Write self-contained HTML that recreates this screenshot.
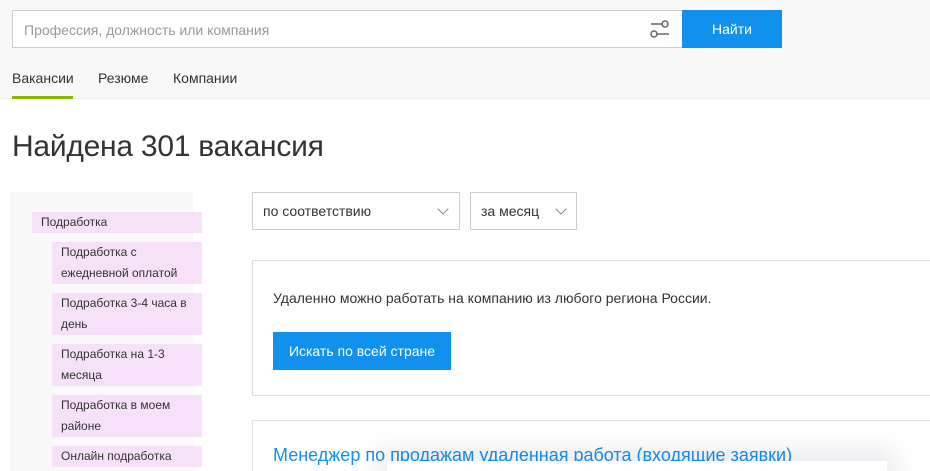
<!DOCTYPE html>
<html style="overflow:hidden;height:471px"><head><meta charset="utf-8"><style>
*{margin:0;padding:0;box-sizing:border-box}
body{width:930px;height:471px;overflow:hidden;background:#fff;font-family:"Liberation Sans",Arial,sans-serif;position:relative;color:#333}
.top{position:absolute;left:0;top:0;width:930px;height:99px;background:#f8f8f8;border-bottom:1px solid #eee}
.inp{position:absolute;left:12px;top:10px;width:671px;height:38px;background:#fff;border:1px solid #ccc;border-right:none;font-size:14px;color:#999;padding:11px 0 0 11px}
.btn{position:absolute;left:682px;top:10px;width:100px;height:38px;background:#1190ee;color:#fff;font-size:14px;text-align:center;line-height:38px}
.tabs{position:absolute;top:70px;font-size:14px;color:#333}
.ul{position:absolute;left:12px;top:96px;width:61px;height:3px;background:#8ab800}
h1{position:absolute;left:12px;top:130px;font-size:30px;font-weight:normal;color:#333;letter-spacing:-0.25px}
.side{position:absolute;left:10px;top:192px;width:183px;height:279px;background:#f8f8f8}
.it{position:absolute;background:#f6e1f9;font-size:12px;line-height:21px;color:#333;padding:0 9px}
.sel{position:absolute;top:192px;height:38px;border:1px solid #ccc;font-size:14px;line-height:36px;padding-left:10px;background:#fff}
.chev{position:absolute;top:12px;width:8px;height:8px;border-right:1.5px solid #888;border-bottom:1.5px solid #888;transform:rotate(45deg)}
.box{position:absolute;left:252px;top:260px;width:678px;height:136px;border:1px solid #ddd;border-right:none}
.box2{position:absolute;left:252px;top:420px;width:678px;height:51px;border:1px solid #e4e4e4;border-right:none;border-bottom:none;overflow:hidden}
</style></head><body>
<div class="top"></div>
<div class="inp">Профессия, должность или компания</div>
<svg style="position:absolute;left:649px;top:19px" width="22" height="20" viewBox="0 0 22 20"><g stroke="#666" stroke-width="1.5" fill="none"><line x1="2" y1="5" x2="13" y2="5"/><circle cx="16" cy="5" r="3"/><circle cx="5" cy="15" r="3"/><line x1="8" y1="15" x2="20" y2="15"/></g></svg>
<div class="btn">Найти</div>
<div class="tabs" style="left:12px">Вакансии</div>
<div class="tabs" style="left:98px">Резюме</div>
<div class="tabs" style="left:173px">Компании</div>
<div class="ul"></div>
<h1>Найдена 301 вакансия</h1>
<div class="side"></div>
<div class="it" style="left:32px;top:212px;width:170px">Подработка</div>
<div class="it" style="left:52px;top:242px;width:150px;height:42px">Подработка с ежедневной оплатой</div>
<div class="it" style="left:52px;top:293px;width:150px;height:42px">Подработка 3-4 часа в день</div>
<div class="it" style="left:52px;top:344px;width:150px;height:42px">Подработка на 1-3 месяца</div>
<div class="it" style="left:52px;top:395px;width:150px;height:42px">Подработка в моем районе</div>
<div class="it" style="left:52px;top:446px;width:150px;height:21px">Онлайн подработка</div>
<div class="sel" style="left:252px;width:208px">по соответствию<div class="chev" style="left:186px"></div></div>
<div class="sel" style="left:470px;width:107px">за месяц<div class="chev" style="left:86px"></div></div>
<div class="box">
<div style="position:absolute;left:20px;top:29px;font-size:14px;color:#333">Удаленно можно работать на компанию из любого региона России.</div>
<div style="position:absolute;left:20px;top:71px;width:178px;height:38px;background:#1190ee;color:#fff;font-size:14px;line-height:38px;text-align:center">Искать по всей стране</div>
</div>
<div class="box2"><div style="position:absolute;left:20px;top:24px;font-size:18px;color:#1190ee;white-space:nowrap">Менеджер по продажам удаленная работа (входящие заявки)</div></div>
<div style="position:absolute;left:387px;top:461px;width:500px;height:10px;background:#fff;box-shadow:0 0 25px 8px rgba(80,80,120,0.15)"></div>
</body></html>
